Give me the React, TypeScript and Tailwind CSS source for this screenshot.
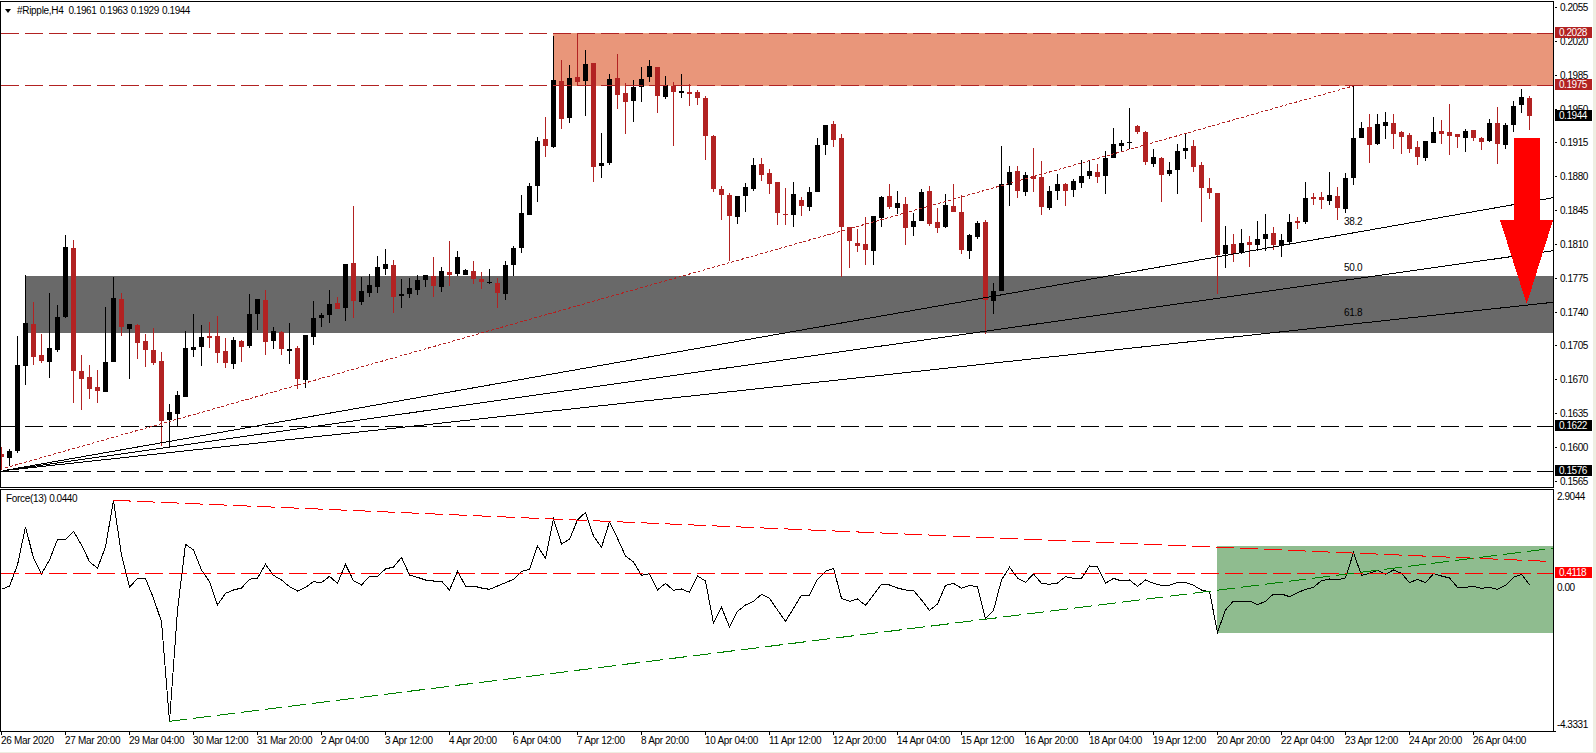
import React from "react";

// [high, bodyTop, bodyBottom, low, isRed]
const candles: number[][] = [
[447,454,457,470,1],[449,451,458,466,0],[336,365,451,453,0],[275,323,366,385,0],[302,324,357,365,1],[334,355,361,363,1],[293,348,362,378,0],[305,317,350,352,0],[235,247,317,318,0],[240,248,371,403,1],
[355,371,379,410,1],[365,377,389,399,1],[370,387,391,403,1],[307,362,392,392,0],[277,298,362,362,0],[293,299,327,336,1],[324,324,329,379,0],[324,325,343,359,1],[334,341,350,367,1],[328,350,363,365,1],
[352,361,421,446,1],[404,412,420,447,0],[391,395,414,426,0],[331,348,397,397,0],[314,347,350,357,0],[325,337,347,366,0],[322,336,338,348,1],[316,336,353,363,1],[338,351,363,368,1],[337,340,364,369,0],
[340,341,347,362,1],[294,314,346,348,0],[299,299,314,330,0],[290,300,342,355,1],[327,331,341,349,0],[331,332,349,355,1],[323,349,351,364,0],[346,348,379,389,1],[335,335,380,388,0],[301,318,337,345,0],
[313,315,318,327,0],[290,304,315,323,0],[297,303,309,309,1],[264,264,308,321,0],[206,263,301,318,1],[277,291,302,305,0],[274,285,293,297,0],[256,267,287,293,0],[249,264,269,275,0],[260,265,297,313,1],
[279,294,296,308,0],[278,288,294,298,0],[275,280,290,295,0],[275,275,280,287,0],[257,276,286,297,1],[267,271,287,292,0],[241,272,275,286,1],[251,257,274,276,0],[269,270,275,275,0],[261,271,279,284,1],
[272,279,282,289,1],[269,282,283,284,0],[278,283,293,308,1],[261,265,294,300,0],[246,248,265,276,0],[195,213,248,253,0],[183,186,215,215,0],[137,141,186,202,0],[117,139,146,157,1],[36,80,147,148,0],
[60,81,119,129,1],[65,78,118,123,0],[33,77,82,86,1],[50,64,81,116,0],[63,63,167,182,1],[133,163,166,178,0],[74,79,163,165,0],[54,78,95,109,1],[83,93,102,134,1],[80,87,101,122,0],
[67,79,87,102,0],[60,66,77,82,0],[67,67,96,113,1],[76,85,97,99,0],[82,86,92,146,1],[74,91,93,98,0],[84,92,94,106,1],[90,92,98,105,1],[96,98,136,160,1],[135,136,189,192,1],
[186,189,195,220,1],[193,195,216,261,1],[196,196,217,224,0],[183,187,196,212,0],[158,165,189,191,0],[158,164,175,181,1],[169,173,184,194,1],[182,182,213,225,1],[188,214,215,225,1],[182,194,215,227,0],
[197,200,206,216,1],[187,192,207,211,0],[138,145,192,192,0],[125,125,145,155,0],[121,124,140,147,1],[134,138,227,277,1],[227,227,241,268,1],[229,243,246,252,1],[217,244,250,265,1],[216,216,251,265,0],
[196,197,218,227,0],[184,196,207,209,1],[191,203,208,214,0],[197,204,228,245,1],[213,221,227,236,0],[189,192,221,221,0],[186,191,224,226,1],[208,222,228,233,1],[194,205,227,228,0],[184,206,212,212,1],
[195,212,250,254,1],[234,235,251,259,0],[221,223,237,239,0],[220,222,300,334,1],[283,291,301,314,0],[146,184,291,291,0],[166,172,185,206,0],[166,171,191,198,1],[172,175,192,196,0],[148,176,179,192,1],
[161,177,207,215,1],[186,191,208,210,0],[174,184,191,200,0],[183,184,191,206,1],[179,181,190,197,0],[160,176,183,188,0],[160,171,176,179,0],[164,172,177,183,1],[151,158,176,194,0],[128,144,158,158,0],
[140,143,146,151,0],[108,142,143,149,0],[125,126,132,134,1],[131,132,162,165,1],[149,157,164,167,0],[157,158,175,202,1],[162,170,174,176,0],[144,151,170,194,0],[133,148,151,159,0],[140,146,167,172,1],
[162,165,188,222,1],[178,188,193,199,1],[193,193,255,294,1],[226,245,254,268,0],[234,244,254,262,1],[229,243,253,254,0],[236,242,245,267,1],[221,239,245,251,0],[214,234,239,251,0],[227,233,245,250,1],
[234,240,245,257,0],[214,222,242,244,0],[217,221,223,229,1],[182,198,222,224,0],[193,197,199,205,1],[192,197,200,209,1],[172,195,201,205,0],[187,196,208,220,1],[173,178,209,213,0],[86,138,178,185,0],
[122,128,138,138,0],[114,127,145,163,1],[114,124,144,145,0],[112,122,126,139,0],[114,123,134,149,1],[131,132,137,154,1],[133,135,149,153,1],[141,147,157,165,1],[141,141,158,161,0],[117,132,143,143,0],
[120,131,134,144,1],[104,132,136,155,1],[134,134,137,148,1],[129,131,138,152,0],[130,130,138,141,1],[137,138,142,150,1],[119,123,141,142,0],[107,123,144,164,1],[123,125,145,149,0],[101,106,125,132,0],
[89,97,105,113,0],[96,98,116,130,1],
];

const force: number[] = [
...[358,348,285,170,265,312,270,208,208,184,225,275,295,230,92,255,352,325,325,385,455,755,420,223,240,300,335,405,370,360,354,328,324,283,316,330,350,363,352,335,338,319,340,283,332,345,319,319,297,291].map(z=>470+z/3),
...[232,285,292,300,303,303,330,274,318,318,324,328,318,308,298,274,268,198,235,117,192,178,120,97,168,202,125,175,228,246,286,281,330,310,331,327,337,288,303,430,382,441,394,375,364,343,355,390,424,385].map(z=>480+z/3),
...[345,345,298,274,265,355,364,357,376,345,313,315,324,330,331,360,391,372,316,310,325,316,321,416,391,300,262,294,307,282,310,313,309,290,295,295,258,261,310,295,303,300,319,300,310,316,316,307].map(z=>480+z/3),
...[757,766,780,785,907,840,813,813,813,824,814,792,792,800,788,778,772,752,747,749,744,668,736,730,721,733,720,730,758,748,758,731,738,744,772,772,769,775,772,778,766,742,733,764].map(z=>330+z/3),
];

const priceLabels = ["0.2055","0.2020","0.1985","0.1950","0.1915","0.1880","0.1845","0.1810","0.1775","0.1740","0.1705","0.1670","0.1635","0.1600","0.1565"];
const timeLabels = ["26 Mar 2020","27 Mar 20:00","29 Mar 04:00","30 Mar 12:00","31 Mar 20:00","2 Apr 04:00","3 Apr 12:00","4 Apr 20:00","6 Apr 04:00","7 Apr 12:00","8 Apr 20:00","10 Apr 04:00","11 Apr 12:00","12 Apr 20:00","14 Apr 04:00","15 Apr 12:00","16 Apr 20:00","18 Apr 04:00","19 Apr 12:00","20 Apr 20:00","22 Apr 04:00","23 Apr 12:00","24 Apr 20:00","26 Apr 04:00"];

const RED = "#b22222";

function Tag({ text, className }: { text: string; className: string }) {
  return (
    <div className={`absolute left-px w-[37px] h-[11px] pl-[4px] leading-[11px] tracking-[-0.45px] text-white ${className}`}>{text}</div>
  );
}

export default function App() {
  return (
    <div className="w-[1596px] h-[753px] bg-[#eeeee2] overflow-hidden font-['Liberation_Sans',sans-serif] text-[10px] leading-[11px] tracking-[-0.3px] text-black">
      <div className="w-[1593px] h-[752px] bg-white flex flex-col">
        {/* price pane */}
        <div className="flex mt-px h-[487px]">
          <div className="relative w-[1554px] h-[487px] border border-black">
            <svg width="1552" height="485" viewBox="1 2 1552 485" shapeRendering="crispEdges" className="block">
              <rect x="553" y="33" width="1000" height="53" fill="#e9967a" />
              <rect x="25" y="276" width="1528" height="56.5" fill="#696969" />
              {candles.map((c, i) => {
                const cx = 1.5 + 8 * i;
                const col = c[4] ? RED : "#000";
                return (
                  <g key={i}>
                    <line x1={cx} x2={cx} y1={c[0]} y2={c[3]} stroke={col} />
                    <rect x={cx - 2.5} y={c[1]} width="5" height={Math.max(1, c[2] - c[1])} fill={col} />
                  </g>
                );
              })}
              <line x1="1" x2="1553" y1="33.5" y2="33.5" stroke={RED} strokeDasharray="18 6" />
              <line x1="1" x2="1553" y1="85.5" y2="85.5" stroke={RED} strokeDasharray="18 6" />
              <line x1="1" x2="1553" y1="426.5" y2="426.5" stroke="#000" strokeDasharray="18 6" />
              <line x1="1" x2="1553" y1="471.5" y2="471.5" stroke="#000" strokeDasharray="18 6" />
              <line x1="5" y1="468" x2="1353" y2="86" stroke={RED} strokeDasharray="3 2" />
              <line x1="3" y1="470.7" x2="1553" y2="197.7" stroke="#000" />
              <line x1="3" y1="470.7" x2="1553" y2="250.7" stroke="#000" />
              <line x1="3" y1="470.7" x2="1553" y2="302.3" stroke="#000" />
              <polygon points="1513.5,138 1540,138 1540,220 1553,220 1526.7,304 1500,220 1513.5,220" fill="#ff0000" />
            </svg>
            <div className="absolute left-[4px] top-[3px] flex items-center gap-[6px]">
              <svg width="6" height="4" viewBox="0 0 6 4" className="block"><polygon points="0,0 6,0 3,4" fill="#000" /></svg>
              <span className="whitespace-pre">#Ripple,H4  <span className="tracking-[-0.45px] [word-spacing:1px]">0.1961 0.1963 0.1929 0.1944</span></span>
            </div>
            <span className="absolute left-[1343px] top-[214px]">38.2</span>
            <span className="absolute left-[1343px] top-[260px]">50.0</span>
            <span className="absolute left-[1343px] top-[305px]">61.8</span>
          </div>
          <div className="relative w-[39px] h-[487px] flex flex-col justify-between pt-px pb-px tracking-[-0.45px]">
            {priceLabels.map((p) => (
              <div key={p} className="flex items-center h-[11px] pl-px">
                <div className="w-[2px] h-px bg-black" />
                <span className="ml-[3px]">{p}</span>
              </div>
            ))}
            <Tag text="0.2028" className="top-[26px] bg-[#b22222]" />
            <Tag text="0.1975" className="top-[78px] bg-[#b22222]" />
            <Tag text="0.1944" className="top-[109px] bg-black" />
            <Tag text="0.1622" className="top-[419px] bg-black" />
            <Tag text="0.1576" className="top-[464px] bg-black" />
          </div>
        </div>
        {/* indicator pane */}
        <div className="flex mt-px h-[243px]">
          <div className="relative w-[1554px] h-[243px] border border-black">
            <svg width="1552" height="241" viewBox="1 490 1552 241" shapeRendering="crispEdges" className="block">
              <rect x="1217" y="546" width="336" height="87" fill="#8fbc8f" />
              <polyline points={force.map((y, i) => `${1.5 + 8 * i},${y}`).join(" ")} fill="none" stroke="#000" />
              <line x1="1" x2="1553" y1="573.5" y2="573.5" stroke="#ff0000" strokeDasharray="18 6" />
              <line x1="113" y1="500.3" x2="1547" y2="561.3" stroke="#ff0000" strokeDasharray="18 6" />
              <line x1="169.3" y1="721.3" x2="1553" y2="548.3" stroke="#008000" strokeDasharray="18 6" />
            </svg>
            <span className="absolute left-[5px] top-[3px]">Force(13) <span className="tracking-[-0.45px]">0.0440</span></span>
          </div>
          <div className="relative w-[39px] h-[243px] pl-[3px] pt-[2px] tracking-[-0.45px]">
            <div className="h-[11px]">2.9044</div>
            <div className="h-[11px] mt-[80px]">0.00</div>
            <div className="h-[11px] mt-[126px]">-4.3331</div>
            <Tag text="0.4118" className="top-[78px] bg-[#ff0000]" />
            <div className="absolute left-0 bottom-0 w-[2px] h-px bg-black" />
          </div>
        </div>
        {/* time axis */}
        <div className="flex">
          {timeLabels.map((t) => (
            <div key={t} className="w-[64px] shrink-0 flex flex-col">
              <div className="w-px h-[3px] bg-black ml-px" />
              <span className="ml-px whitespace-nowrap h-[11px]">{t}</span>
            </div>
          ))}
        </div>
      </div>
    </div>
  );
}
